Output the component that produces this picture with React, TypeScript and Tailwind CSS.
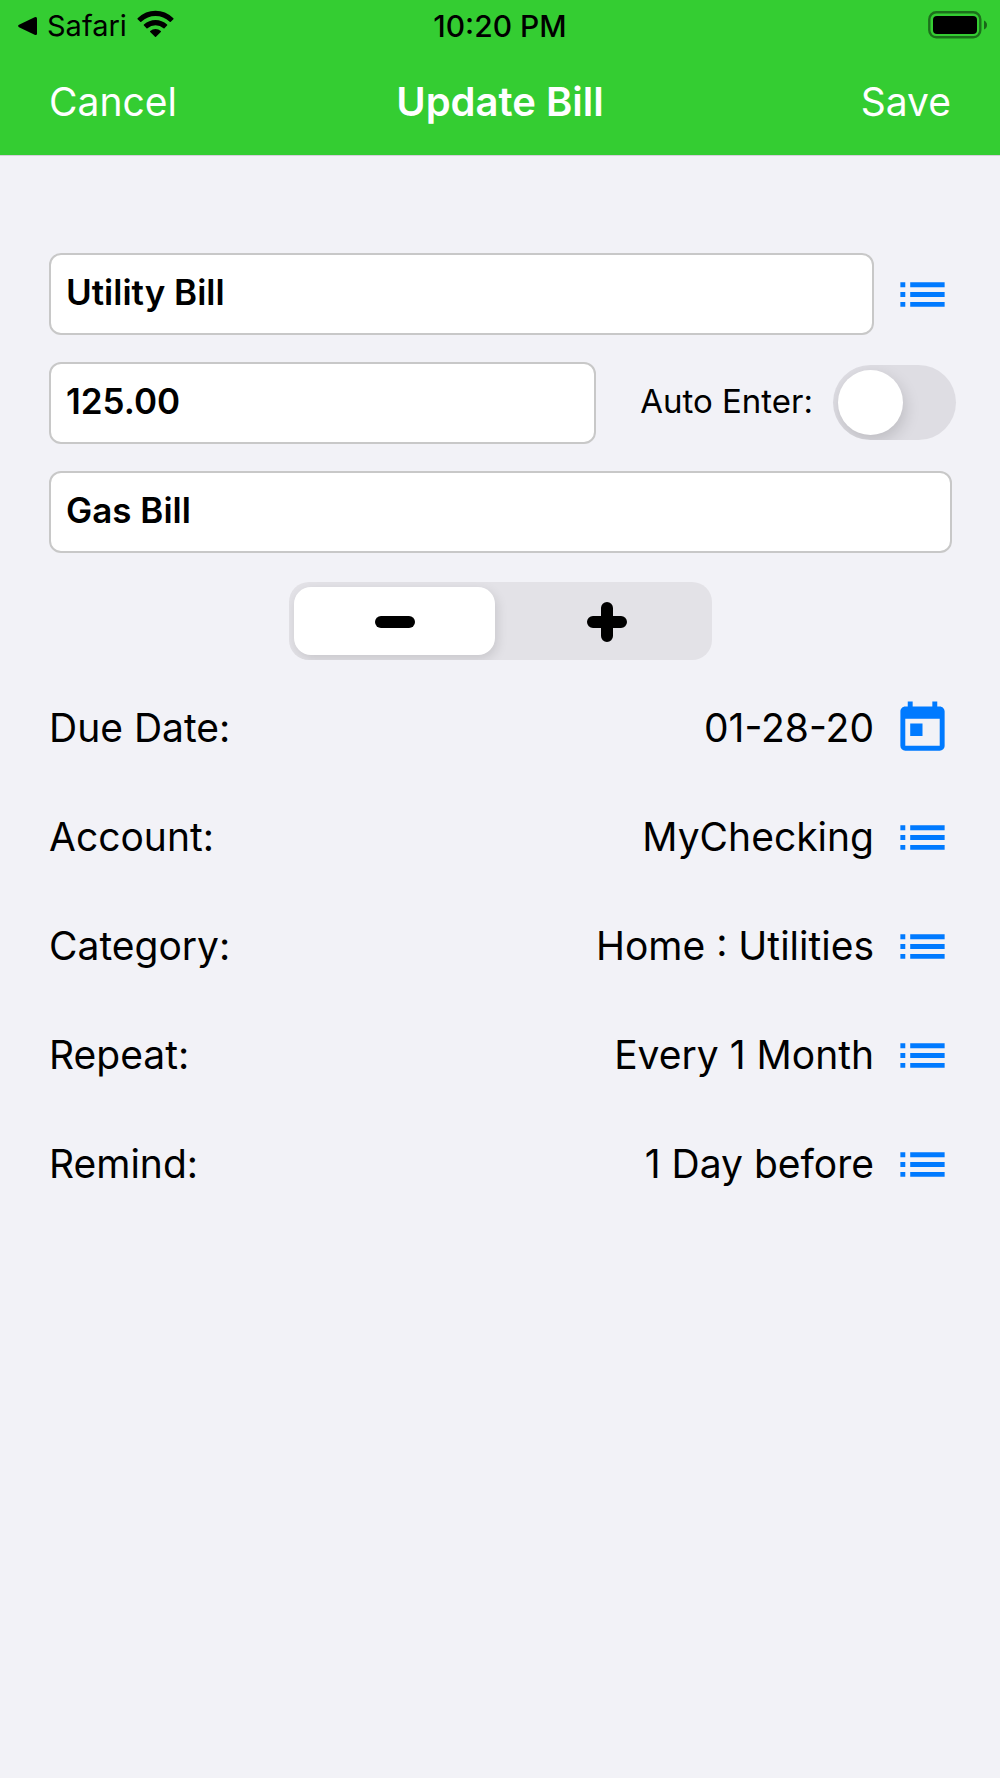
import { useState } from "react";
import { MdList, MdToday } from "react-icons/md";

const details = [
  { label: "Due Date:", value: "01-28-20", icon: MdToday },
  { label: "Account:", value: "MyChecking", icon: MdList },
  { label: "Category:", value: "Home : Utilities", icon: MdList },
  { label: "Repeat:", value: "Every 1 Month", icon: MdList },
  { label: "Remind:", value: "1 Day before", icon: MdList },
];

const fieldClass =
  "h-[82px] min-w-0 rounded-xl border-2 border-[#c8c8c8] bg-white px-[15px] pb-1 text-[35px] font-semibold text-black outline-none";

const segmentClass =
  "flex items-center justify-center rounded-[17px] aria-pressed:bg-white aria-pressed:shadow-[2px_4px_12px_rgba(0,0,0,0.12)]";

function StatusBar() {
  return (
    <div className="grid h-[51px] grid-cols-[1fr_auto_1fr] items-center px-3 text-[29px] leading-9 text-black">
      <div className="flex items-center pl-1.5">
        <svg width="19" height="20" viewBox="0 0 19 20" aria-hidden="true">
          <path d="M1 8.8 16.6 1.2Q19 .2 19 2.6V17.4Q19 19.8 16.6 18.8L1 11.2Q-.8 10 1 8.8Z" />
        </svg>
        <span className="ml-2.5">Safari</span>
        <svg className="mb-1 ml-2.5" width="37" height="28" viewBox="0 0 37 28" aria-hidden="true">
          <path d="M.6 8.2Q8.5.8 18.5.8T36.4 8.2Q36.8 8.7 36.4 9.2L33.8 11.8Q33.2 12.3 32.7 11.8 26.5 6 18.5 6T4.3 11.8Q3.8 12.3 3.2 11.8L.6 9.2Q.2 8.7.6 8.2Z" />
          <path d="M6.9 14.6Q12 10 18.5 10T30.1 14.6Q30.6 15.1 30.1 15.6L27.5 18.2Q27 18.6 26.5 18.2 23 15.2 18.5 15.2T10.5 18.2Q10 18.6 9.5 18.2L6.9 15.6Q6.4 15.1 6.9 14.6Z" />
          <path d="M13.2 21Q15.5 19.1 18.5 19.1T23.8 21Q24.3 21.5 23.8 22L19 26.8Q18.5 27.3 18 26.8L13.2 22Q12.7 21.5 13.2 21Z" />
        </svg>
      </div>
      <span className="text-[30px] font-medium">10:20 PM</span>
      <svg className="mb-0.5 justify-self-end" width="60" height="28" viewBox="0 0 60 28" aria-hidden="true">
        <rect x="1.3" y="1.3" width="51" height="25" rx="7" fill="none" stroke="#000" strokeOpacity=".45" strokeWidth="2.4" />
        <rect x="5" y="5" width="44" height="18" rx="4" />
        <path d="M56 9.5Q59 11 59 14T56 18.5Z" fillOpacity=".5" />
      </svg>
    </div>
  );
}

export default function App() {
  const [name, setName] = useState("Utility Bill");
  const [amount, setAmount] = useState("125.00");
  const [note, setNote] = useState("Gas Bill");
  const [autoEnter, setAutoEnter] = useState(false);
  const [sign, setSign] = useState("minus");

  return (
    <div className="min-h-screen bg-[#f2f2f7] font-['Inter',sans-serif] text-black">
      <header className="border-b border-[#d5cfda] bg-[#34cd32]">
        <StatusBar />
        <nav className="grid h-[104px] grid-cols-[1fr_auto_1fr] items-center px-[49px] pb-0.5 text-[39px] text-white">
          <button className="justify-self-start">Cancel</button>
          <h1 className="text-[40px] font-semibold">Update Bill</h1>
          <button className="justify-self-end">Save</button>
        </nav>
      </header>

      <main className="pt-[97px] pr-12 pl-[49px]">
        {/* FIELDS */}
        <div className="flex flex-col gap-[27px]">
          <div className="flex items-center gap-[19px]">
            <input
              aria-label="Payee"
              value={name}
              onChange={(e) => setName(e.target.value)}
              className={`${fieldClass} flex-1`}
            />
            <button aria-label="Choose payee" className="text-[#007aff]">
              <MdList size={59} />
            </button>
          </div>

          <div className="flex items-center justify-between">
            <input
              aria-label="Amount"
              value={amount}
              onChange={(e) => setAmount(e.target.value)}
              className={`${fieldClass} w-[547px]`}
            />
            <label className="-mr-1 flex items-center gap-5 pb-0.5 text-[33px] whitespace-nowrap">
              Auto Enter:
              <span className="relative h-[75px] w-[123px] overflow-hidden rounded-full bg-[#dedde3]">
                <input
                  type="checkbox"
                  role="switch"
                  checked={autoEnter}
                  onChange={(e) => setAutoEnter(e.target.checked)}
                  className="peer h-full w-full appearance-none rounded-full checked:bg-[#34cd32]"
                />
                <span className="pointer-events-none absolute top-[5px] left-[5px] size-[65px] rounded-full bg-white shadow-[2px_6px_16px_rgba(0,0,0,0.15)] peer-checked:left-[53px]" />
              </span>
            </label>
          </div>

          <input
            aria-label="Note"
            value={note}
            onChange={(e) => setNote(e.target.value)}
            className={fieldClass}
          />
        </div>

        {/* MINUS / PLUS */}
        <div className="mx-auto mt-[29px] grid h-[78px] w-[423px] grid-cols-2 gap-[11px] overflow-hidden rounded-[20px] bg-[#e3e2e7] p-[5px]">
          <button
            aria-label="Minus"
            aria-pressed={sign === "minus"}
            onClick={() => setSign("minus")}
            className={segmentClass}
          >
            <svg width="42" height="42" viewBox="0 0 42 42" stroke="#000" strokeWidth="12" strokeLinecap="round">
              <path d="M7 22H35" />
            </svg>
          </button>
          <button
            aria-label="Plus"
            aria-pressed={sign === "plus"}
            onClick={() => setSign("plus")}
            className={segmentClass}
          >
            <svg width="42" height="42" viewBox="0 0 42 42" stroke="#000" strokeWidth="12" strokeLinecap="round">
              <path d="M7 22H35M21 8V36" />
            </svg>
          </button>
        </div>

        {/* DETAILS */}
        <dl className="mt-[14px]">
          {details.map(({ label, value, icon: Icon }) => (
            <div key={label} className="flex h-[109px] items-center text-[39px]">
              <dt>{label}</dt>
              <dd className="ml-auto flex items-center gap-[19px]">
                {value}
                <button aria-label={`Change ${label}`} className="text-[#007aff]">
                  <Icon size={59} />
                </button>
              </dd>
            </div>
          ))}
        </dl>
      </main>
    </div>
  );
}
